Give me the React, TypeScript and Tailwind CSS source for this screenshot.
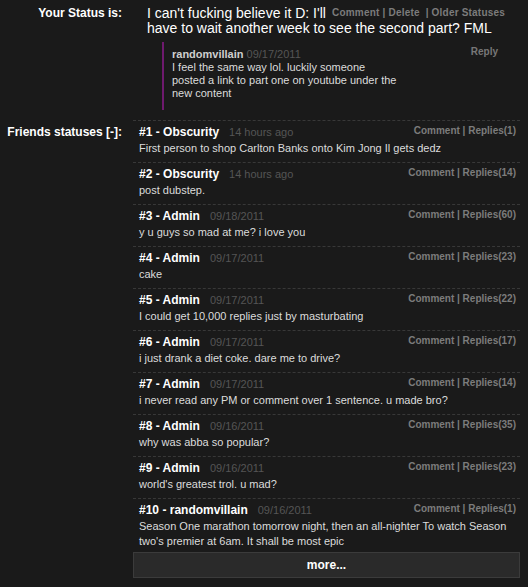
const statuses = [
  { n: 1, user: 'Obscurity', when: '14 hours ago', replies: 1, text: 'First person to shop Carlton Banks onto Kim Jong Il gets dedz' },
  { n: 2, user: 'Obscurity', when: '14 hours ago', replies: 14, text: 'post dubstep.' },
  { n: 3, user: 'Admin', when: '09/18/2011', replies: 60, text: 'y u guys so mad at me? i love you' },
  { n: 4, user: 'Admin', when: '09/17/2011', replies: 23, text: 'cake' },
  { n: 5, user: 'Admin', when: '09/17/2011', replies: 22, text: 'I could get 10,000 replies just by masturbating' },
  { n: 6, user: 'Admin', when: '09/17/2011', replies: 17, text: 'i just drank a diet coke. dare me to drive?' },
  { n: 7, user: 'Admin', when: '09/17/2011', replies: 14, text: 'i never read any PM or comment over 1 sentence. u made bro?' },
  { n: 8, user: 'Admin', when: '09/16/2011', replies: 35, text: 'why was abba so popular?' },
  { n: 9, user: 'Admin', when: '09/16/2011', replies: 23, text: "world's greatest trol. u mad?" },
  {
    n: 10,
    user: 'randomvillain',
    when: '09/16/2011',
    replies: 1,
    text: "Season One marathon tomorrow night, then an all-nighter To watch Season two's premier at 6am. It shall be most epic",
  },
];

export default function App() {
  return (
    <div className="min-h-[587px] bg-[#1a1a1a] text-white font-['Liberation_Sans',Arial,sans-serif]">
      <div className="grid grid-cols-[122px_387px] gap-x-[11px]">
        {/* your status */}
        <div className="pt-[6px] text-right text-[12px] font-bold leading-[14px]">Your Status is:</div>
        <div className="pl-[14px] pt-[6px]">
          <div className="text-[14px] leading-[15px]">
            <div className="float-right mr-[15px] ml-[6px] text-[10px] font-bold leading-[13px] tracking-[0.2px] text-[#7c7c7c]">
              Comment | Delete &nbsp;| Older Statuses
            </div>
            I can't fucking believe it D: I'll have to wait another week to see the second part? FML
          </div>
          <div className="mt-[6px] ml-[15px] mr-[16px] border-l-2 border-[#6e1a6e] pl-[8px] pt-[5px] pb-[10px]">
            <div className="flex items-start justify-between text-[11px] leading-[14px]">
              <div>
                <span className="font-bold text-[#cfcfcf]">randomvillain</span>
                <span className="ml-[3px] text-[#555]">09/17/2011</span>
              </div>
              <span className="mr-[6px] mt-[-2px] text-[10px] font-bold text-[#777]">Reply</span>
            </div>
            <div className="w-[225px] text-[11px] leading-[13px] text-[#dcdcdc]">
              I feel the same way lol. luckily someone posted a link to part one on youtube under the new content
            </div>
          </div>
        </div>

        {/* friends statuses */}
        <div className="mt-[10px] pt-[5px] text-right text-[12px] font-bold leading-[14px]">Friends statuses [-]:</div>
        <div className="mt-[10px]">
          <div>
            {statuses.map((s) => (
              <div
                key={s.n}
                className="border-t border-dashed border-[#383838] pl-[6px] pr-[4px] pt-[4px] pb-[6px] last:pb-[3px]"
              >
                <div className="flex h-[14px] items-start justify-between text-[12px] leading-[14px]">
                  <div className="whitespace-nowrap">
                    <span className="font-bold text-white">
                      #{s.n} - {s.user}
                    </span>
                    <span className="ml-[10px] text-[11px] text-[#555]">{s.when}</span>
                  </div>
                  <span className="mt-[-1px] text-[10px] font-bold leading-[14px] text-[#7c7c7c]">
                    Comment | Replies({s.replies})
                  </span>
                </div>
                <div className="mt-[2px] text-[11px] leading-[15px] text-[#dcdcdc]">{s.text}</div>
              </div>
            ))}
          </div>
          <div className="flex h-[26px] items-center justify-center border border-[#3b3b3b] bg-[#2a2a2a] text-[12px] font-bold leading-[14px]">
            more...
          </div>
        </div>
      </div>
    </div>
  );
}
